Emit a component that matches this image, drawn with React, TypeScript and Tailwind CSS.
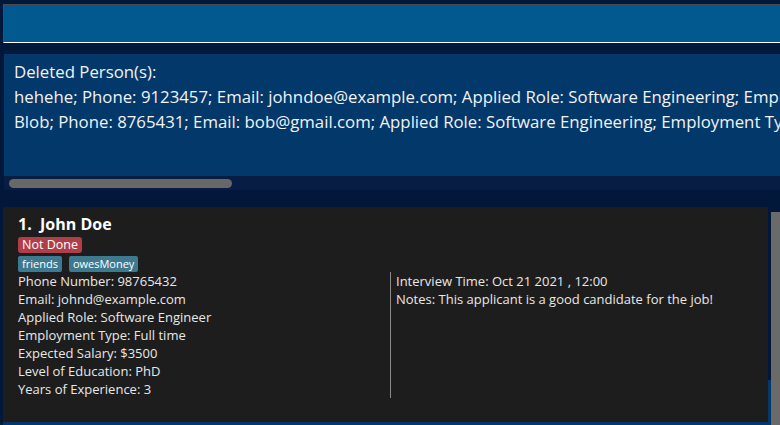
import React from "react";

export default function App() {
  const font = { fontFamily: '"Open Sans", "Liberation Sans", sans-serif' };
  const details = [
    "Phone Number: 98765432",
    "Email: johnd@example.com",
    "Applied Role: Software Engineer",
    "Employment Type: Full time",
    "Expected Salary: $3500",
    "Level of Education: PhD",
    "Years of Experience: 3",
  ];
  return (
    <div className="w-[780px] h-[425px] overflow-hidden bg-[#02183a] flex flex-col" style={font}>
      {/* command box */}
      <div className="pt-[4px] pl-[3px]">
        <div className="h-[39px] bg-[#01598f] border-l border-t border-[#4a4a4a] border-b border-b-white"></div>
      </div>
      {/* result display */}
      <div className="mt-[11px] ml-[4px] flex flex-col">
        <div className="h-[122px] bg-[#03386b] pl-[10px] pt-[5px] text-[16.8px] leading-[25px] text-[#f2f2f2] whitespace-nowrap overflow-hidden">
          <div>Deleted Person(s):</div>
          <div>hehehe; Phone: 9123457; Email: johndoe@example.com; Applied Role: Software Engineering; Employment Type: Full time</div>
          <div>Blob; Phone: 8765431; Email: bob@gmail.com; Applied Role: Software Engineering; Employment Type: Full time</div>
        </div>
        <div className="h-[14px] bg-[#081d44] pl-[5px] pt-[3px]">
          <div className="w-[223px] h-[9px] rounded-full bg-[#686868]"></div>
        </div>
      </div>
      {/* list */}
      <div className="mt-[17px] flex-1 flex">
        <div className="ml-[3px] w-[765px] flex flex-col">
          <div className="flex-1 bg-[#1d1d1d] pl-[15px] pt-[6px] text-[#e8e8e8]">
            <div className="text-[16px] leading-[22px] font-bold text-white whitespace-pre">{"1.  John Doe"}</div>
            <div className="mt-[2px] flex">
              <span className="h-[16px] px-[4px] rounded-[3px] bg-[#b03e49] text-white text-[12.5px] leading-[16px]">Not Done</span>
            </div>
            <div className="mt-[3px] flex gap-[7px]">
              <span className="h-[16px] px-[4px] rounded-[2px] bg-[#3d7a8f] text-white text-[11px] leading-[16px]">friends</span>
              <span className="h-[16px] px-[4px] rounded-[2px] bg-[#3d7a8f] text-white text-[11px] leading-[16px]">owesMoney</span>
            </div>
            <div className="flex text-[13px] leading-[18px]">
              <div className="w-[372px]">
                {details.map((d) => (
                  <div key={d}>{d}</div>
                ))}
              </div>
              <div className="border-l border-[#8a8a8a] pl-[5px]">
                <div>Interview Time: Oct 21 2021 , 12:00</div>
                <div>Notes: This applicant is a good candidate for the job!</div>
              </div>
            </div>
          </div>
          <div className="h-[3px] bg-[#03386b]"></div>
        </div>
        <div className="w-[3px] flex flex-col">
          <div className="flex-1"></div>
          <div className="h-[45px] bg-[#03386b]"></div>
        </div>
        <div className="flex-1 pt-[5px]">
          <div className="h-full bg-[#6a6a6a]"></div>
        </div>
      </div>
    </div>
  );
}
